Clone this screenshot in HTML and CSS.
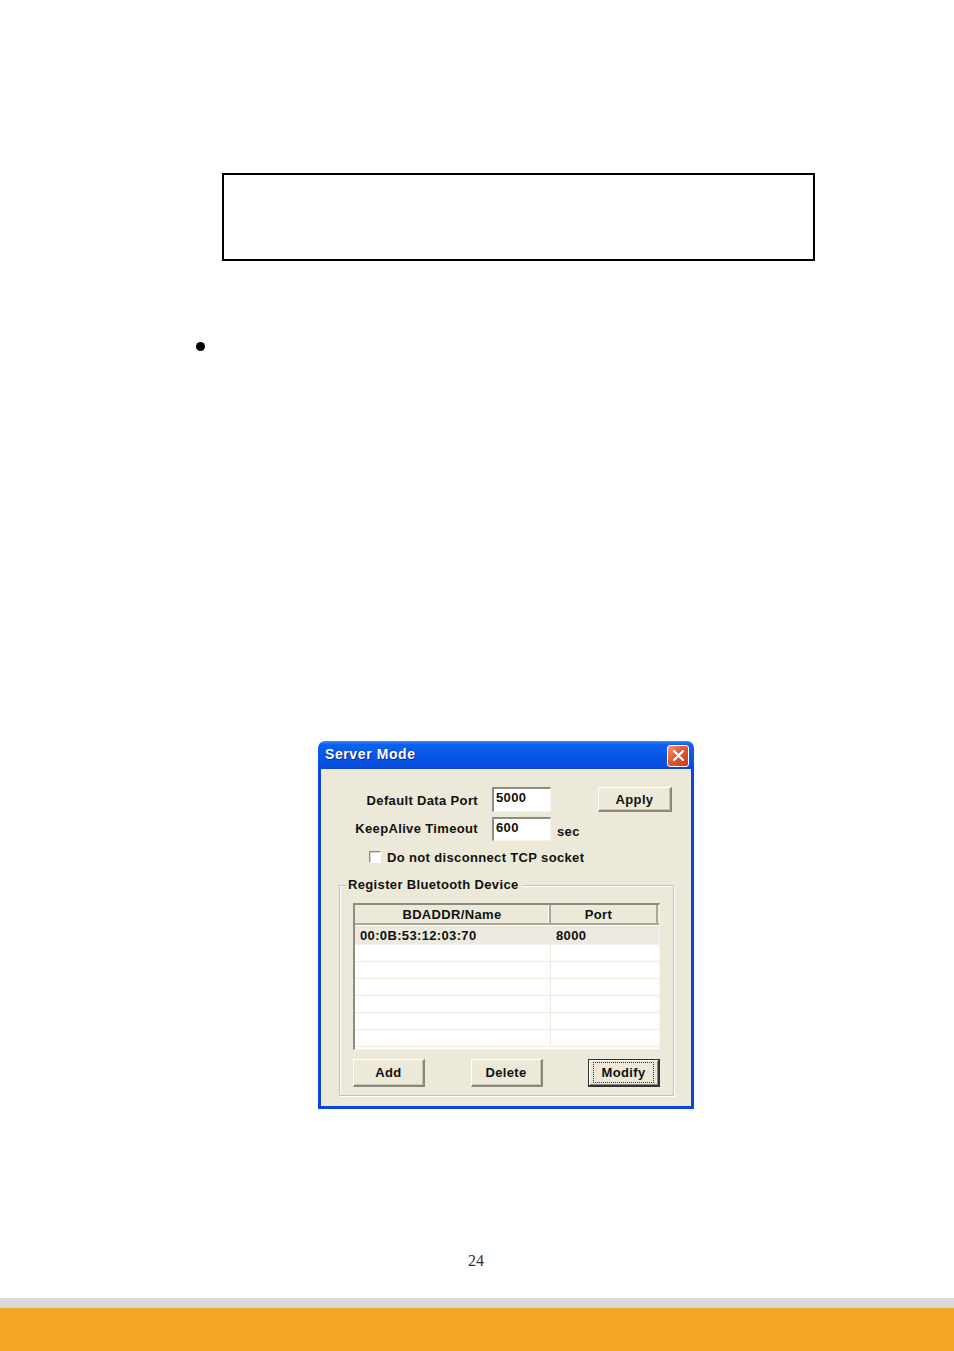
FILE: index.html
```html
<!DOCTYPE html>
<html>
<head>
<meta charset="utf-8">
<link rel="stylesheet" href="styles.css">
</head>
<body>
<div class="page">
  <div class="note-box"></div>
  <div class="bullet"></div>

  <div class="dialog">
    <div class="titlebar">
      <span class="title">Server Mode</span>
      <span class="close">
        <svg width="13" height="13" viewBox="0 0 13 13"><path d="M2 2 L11 11 M11 2 L2 11" stroke="#fff" stroke-width="2.2" stroke-linecap="round"/></svg>
      </span>
    </div>
    <div class="body">
      <div class="row row1">
        <span class="label">Default Data Port</span>
        <span class="input">5000</span>
        <span class="btn apply">Apply</span>
      </div>
      <div class="row row2">
        <span class="label">KeepAlive Timeout</span>
        <span class="input">600</span>
        <span class="unit">sec</span>
      </div>
      <div class="row row3">
        <span class="check"></span>
        <span class="check-label">Do not disconnect TCP socket</span>
      </div>
      <div class="group">
        <span class="legend">Register Bluetooth Device</span>
        <div class="list">
          <div class="lhead">
            <span class="c1">BDADDR/Name</span>
            <span class="c2">Port</span>
          </div>
          <div class="lrow sel"><span class="c1">00:0B:53:12:03:70</span><span class="c2">8000</span></div>
          <div class="lrow"><span class="c1"></span><span class="c2"></span></div>
          <div class="lrow"><span class="c1"></span><span class="c2"></span></div>
          <div class="lrow"><span class="c1"></span><span class="c2"></span></div>
          <div class="lrow"><span class="c1"></span><span class="c2"></span></div>
          <div class="lrow"><span class="c1"></span><span class="c2"></span></div>
          <div class="lrow"><span class="c1"></span><span class="c2"></span></div>
        </div>
        <div class="buttons">
          <span class="btn">Add</span>
          <span class="btn">Delete</span>
          <span class="btn default"><span class="focus">Modify</span></span>
        </div>
      </div>
    </div>
  </div>

  <div class="pagenum">24</div>
  <div class="band-gray"></div>
  <div class="band-orange"></div>
</div>
</body>
</html>
```

FILE: styles.css
```css
html, body {
  margin: 0;
  padding: 0;
  background: #fff;
}
.page {
  width: 954px;
  height: 1351px;
  display: flex;
  flex-direction: column;
  overflow: hidden;
}
.note-box {
  margin-top: 173px;
  margin-left: 222px;
  width: 589px;
  height: 84px;
  border: 2px solid #000;
}
.bullet {
  margin-top: 81px;
  margin-left: 196px;
  width: 9px;
  height: 9px;
  border-radius: 50%;
  background: #000;
}
.dialog {
  margin-top: 390px;
  margin-left: 318px;
  width: 376px;
  height: 368px;
  display: flex;
  flex-direction: column;
  font-family: "Liberation Sans", Arial, sans-serif;
  font-weight: bold;
  font-size: 13px;
  letter-spacing: 0.35px;
  color: #111;
}
.titlebar {
  height: 28px;
  border-radius: 7px 7px 0 0;
  background: linear-gradient(#3a8cf7 0%, #0b62f0 12%, #0857e6 50%, #0650e0 85%, #0a48d2 100%);
  display: flex;
  align-items: center;
  justify-content: space-between;
  padding: 0 5px 0 7px;
  box-sizing: border-box;
}
.title {
  color: #fff;
  font-size: 14px;
  letter-spacing: 0.6px;
  text-shadow: 1px 1px 0 #0a2a8a;
  margin-top: -2px;
}
.close {
  width: 20px;
  height: 20px;
  border: 1px solid #fff;
  border-radius: 3px;
  background: linear-gradient(135deg, #f19a7e 0%, #e05a32 45%, #c63b18 100%);
  display: flex;
  align-items: center;
  justify-content: center;
  margin-top: 1px;
}
.body {
  flex: 1;
  background: #ece9d8;
  border: 3px solid #0a46d8;
  border-top: none;
  padding: 18px 0 0 0;
  display: flex;
  flex-direction: column;
}
.row {
  display: flex;
  align-items: center;
}
.row1 { height: 25px; }
.row2 { height: 24px; margin-top: 5px; }
.label {
  width: 157px;
  text-align: right;
  margin-right: 14px;
  padding-top: 1px;
}
.row2 .label { margin-top: -2px; padding-top: 0; }
.input {
  box-sizing: border-box;
  background: #fff;
  border-top: 2px solid #8e8c80;
  border-left: 2px solid #8e8c80;
  border-right: 1px solid #f4f3ee;
  border-bottom: 1px solid #f4f3ee;
  padding-left: 2px;
  line-height: 17px;
  width: 59px;
  height: 24px;
}
.row1 .input { height: 25px; }
.btn {
  width: 74px;
  height: 25px;
  box-sizing: border-box;
  display: flex;
  align-items: center;
  justify-content: center;
  background: #ece9d8;
  border-top: 1px solid #fff;
  border-left: 1px solid #fff;
  border-right: 2px solid #8a887c;
  border-bottom: 2px solid #8a887c;
  box-shadow: inset -1px -1px 0 #c9c6b6;
}
.apply { margin-left: 47px; }
.unit {
  margin-left: 6px;
  margin-top: 4px;
}
.row3 {
  margin-top: 9px;
  height: 14px;
  padding-left: 48px;
}
.check {
  width: 12px;
  height: 12px;
  box-sizing: border-box;
  background: #fff;
  border-top: 1px solid #8e8c80;
  border-left: 1px solid #8e8c80;
  border-right: 1px solid #fff;
  border-bottom: 1px solid #fff;
  box-shadow: inset 1px 1px 0 #d8d6cb;
}
.check-label { margin-left: 6px; }
.group {
  margin-top: 21px;
  margin-left: 18px;
  width: 335px;
  height: 211px;
  box-sizing: border-box;
  border: 1px solid #c5c2b2;
  box-shadow: inset 1px 1px 0 #fff, 1px 1px 0 #fff;
  position: relative;
  padding: 17px 0 0 13px;
  display: flex;
  flex-direction: column;
}
.legend {
  position: absolute;
  top: -9px;
  left: 6px;
  padding: 0 3px 0 2px;
  background: #ece9d8;
  line-height: 15px;
}
.list {
  width: 307px;
  height: 147px;
  box-sizing: border-box;
  background: #fff;
  border-top: 2px solid #8e8c80;
  border-left: 2px solid #8e8c80;
  border-right: 1px solid #f4f3ee;
  border-bottom: 1px solid #f4f3ee;
  overflow: hidden;
}
.lhead {
  display: flex;
  background: #ece9d8;
  border-bottom: 2px solid #aca899;
  box-sizing: border-box;
  height: 20px;
}
.lhead span {
  display: flex;
  align-items: center;
  justify-content: center;
}
.lhead .c1 {
  width: 194px;
  border-right: 2px solid #aca899;
  box-shadow: inset -1px 0 0 #fff;
}
.lhead .c2 {
  width: 107px;
  box-sizing: border-box;
  padding-right: 10px;
  border-right: 2px solid #aca899;
}
.lrow {
  display: flex;
  height: 17px;
  border-bottom: 1px solid #f1ecdb;
  box-sizing: border-box;
}
.lrow.sel {
  height: 19px;
  margin-top: 1px;
  background: #ebe9e0;
  border-bottom: 1px solid #f3f1ea;
}
.lrow span {
  display: flex;
  align-items: center;
}
.lrow .c1 {
  width: 196px;
  padding-left: 5px;
  box-sizing: border-box;
  border-right: 1px solid #efeadb;
}
.lrow .c2 {
  padding-left: 5px;
}
.lrow.sel .c1 { border-right-color: #ebe9e0; }
.buttons {
  margin-top: 9px;
  width: 307px;
  display: flex;
  justify-content: space-between;
}
.buttons .btn {
  width: 72px;
  height: 28px;
}
.btn.default {
  border: 1px solid #333;
  border-right: 2px solid #333;
  border-bottom: 2px solid #333;
  box-shadow: inset 1px 1px 0 #fff, inset -1px -1px 0 #8a887c;
}
.focus {
  border: 1px dotted #333;
  padding: 2px 8px;
  line-height: 15px;
}
.pagenum {
  margin-top: 142px;
  height: 20px;
  text-align: center;
  padding-right: 2px;
  font-family: "Liberation Serif", "DejaVu Serif", serif;
  font-size: 16px;
  line-height: 20px;
  color: #333;
}
.band-gray {
  margin-top: 27px;
  height: 10px;
  background: #d9d9d9;
}
.band-orange {
  flex: 1;
  background: #f5a623;
}
```
